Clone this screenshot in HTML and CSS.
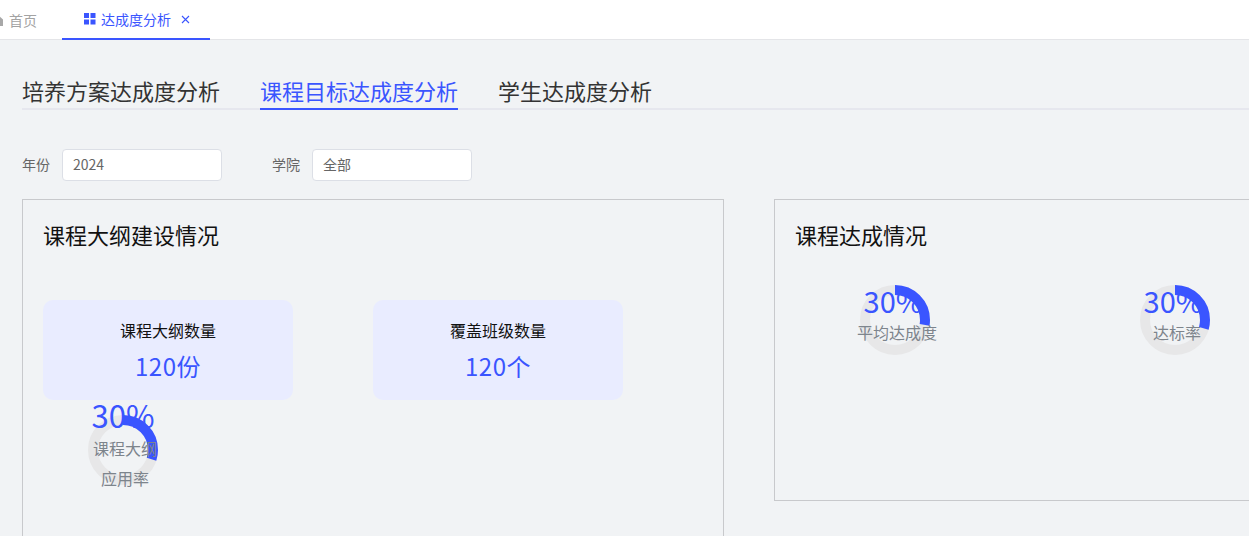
FILE: index.html
```html
<!DOCTYPE html>
<html lang="zh-CN">
<head>
    <meta charset="UTF-8">
    <title>达成度分析</title>
    <link rel="stylesheet" href="styles.css">
</head>
<body>

<div class="topbar">
    <div class="top-tab">
        <svg class="home-icon" width="14" height="14" viewBox="0 0 14 14"><path d="M7 1 13 6.5V13H1V6.5Z" fill="#a8a8a8"/></svg>
        <span>首页</span>
    </div>
    <div class="top-tab active">
        <svg width="12" height="12" viewBox="0 0 12 12" fill="#3a55ff">
            <rect x="0" y="0" width="5" height="5"/><rect x="6.5" y="0" width="5" height="5"/>
            <rect x="0" y="6.5" width="5" height="5"/><rect x="6.5" y="6.5" width="5" height="5"/>
        </svg>
        <span>达成度分析</span>
        <svg class="close-icon" width="9" height="9" viewBox="0 0 9 9"><path d="M1 1 8 8M8 1 1 8" stroke="#3a55ff" stroke-width="1.1"/></svg>
    </div>
</div>

<div class="content">
    <div class="sub-tabs">
        <div class="sub-tab">培养方案达成度分析</div>
        <div class="sub-tab active">课程目标达成度分析</div>
        <div class="sub-tab">学生达成度分析</div>
    </div>

    <div class="filters">
        <label class="filter"><span class="filter-name">年份</span><span class="input">2024</span></label>
        <label class="filter"><span class="filter-name">学院</span><span class="input">全部</span></label>
    </div>

    <div class="panels">
        <div class="panel panel-left">
            <h2>课程大纲建设情况</h2>
            <div class="cards">
                <div class="card">
                    <div class="card-title">课程大纲数量</div>
                    <div class="card-value">120份</div>
                </div>
                <div class="card">
                    <div class="card-title">覆盖班级数量</div>
                    <div class="card-value">120个</div>
                </div>
            </div>
            <div class="ring ring-usage">
                <svg width="70" height="70" viewBox="0 0 70 70">
                    <circle class="track" cx="35" cy="35" r="30"/>
                    <circle class="arc" cx="35" cy="35" r="30" stroke-dasharray="56.5 200"/>
                </svg>
                <div class="ring-text">
                    <div class="ring-num">30%</div>
                    <div class="ring-label">课程大纲应用率</div>
                </div>
            </div>
        </div>

        <div class="panel panel-right">
            <h2>课程达成情况</h2>
            <div class="rings">
                <div class="ring">
                    <svg width="70" height="70" viewBox="0 0 70 70">
                        <circle class="track" cx="35" cy="35" r="30"/>
                        <circle class="arc" cx="35" cy="35" r="30" stroke-dasharray="52 200"/>
                    </svg>
                    <div class="ring-text">
                        <div class="ring-num">30%</div>
                        <div class="ring-label">平均达成度</div>
                    </div>
                </div>
                <div class="ring">
                    <svg width="70" height="70" viewBox="0 0 70 70">
                        <circle class="track" cx="35" cy="35" r="30"/>
                        <circle class="arc" cx="35" cy="35" r="30" stroke-dasharray="55.5 200"/>
                    </svg>
                    <div class="ring-text">
                        <div class="ring-num">30%</div>
                        <div class="ring-label">达标率</div>
                    </div>
                </div>
            </div>
        </div>
    </div>
</div>

</body>
</html>
```

FILE: styles.css
```css
* {
    box-sizing: border-box;
}
html, body {
    height: 536px;
    overflow: hidden;
}
body {
    margin: 0;
    background-color: #f1f3f5;
    color: #333;
    font-family: "Noto Sans CJK SC", "Noto Sans", sans-serif;
}
.topbar {
    display: flex;
    height: 40px;
    background-color: #fff;
    border-bottom: 1px solid #e4e5e8;
    padding-left: 62px;
    position: relative;
}
.top-tab {
    display: flex;
    align-items: center;
    gap: 5px;
    height: 40px;
    font-size: 14px;
    line-height: 38px;
    color: #a3a3a3;
}
.top-tab:first-child {
    position: absolute;
    left: -10px;
    top: 0;
}
.top-tab.active {
    width: 148px;
    padding-left: 22px;
    color: #3a55ff;
    border-bottom: 2px solid #3a55ff;
}
.close-icon {
    margin-left: 5px;
}
.content {
    padding: 35px 0 0 22px;
}
.sub-tabs {
    display: flex;
    gap: 40px;
    height: 35px;
    border-bottom: 2px solid #e6e7ee;
}
.sub-tab {
    height: 35px;
    font-size: 22px;
    line-height: 30px;
    color: #333;
}
.sub-tab.active {
    color: #3a55ff;
    border-bottom: 2px solid #3a55ff;
}
.filters {
    display: flex;
    gap: 50px;
    margin-top: 39px;
}
.filter {
    display: flex;
    align-items: center;
    gap: 12px;
    font-size: 14px;
    color: #666;
}
.filter-name {
    margin-top: -3px;
}
.input {
    width: 160px;
    height: 32px;
    padding-left: 10px;
    line-height: 29px;
    background-color: #fff;
    border: 1px solid #dcdfe6;
    border-radius: 4px;
}
.panels {
    display: flex;
    gap: 50px;
    margin-top: 18px;
}
.panel {
    flex: none;
    padding: 20px;
    border: 1px solid #c8c9cc;
}
.panel h2 {
    margin: -2px 0 2px;
    font-size: 22px;
    font-weight: 400;
    line-height: 32px;
    color: #111;
}
.panel-left {
    width: 702px;
    height: 337px;
    border-bottom: none;
}
.panel-right {
    width: 500px;
    height: 302px;
}
.cards {
    display: flex;
    gap: 80px;
    margin-top: 50px;
}
.card {
    width: 250px;
    height: 100px;
    padding-top: 18px;
    text-align: center;
    background-color: #e9ecff;
    border-radius: 10px;
}
.card-title {
    font-size: 16px;
    line-height: 24px;
    color: #111;
}
.card-value {
    margin-top: 6px;
    font-size: 24px;
    line-height: 36px;
    letter-spacing: 0.5px;
    color: #3a55ff;
}
.rings {
    display: flex;
    gap: 210px;
    margin-top: 35px;
    padding-left: 65px;
}
.ring {
    position: relative;
    width: 70px;
    height: 70px;
}
.ring-usage {
    margin: 15px 0 0 45px;
}
.ring svg {
    display: block;
}
.track, .arc {
    fill: none;
    stroke-width: 10;
}
.track {
    stroke: #e7e7e8;
}
.arc {
    stroke: #3a55ff;
    transform: rotate(-90deg);
    transform-origin: 35px 35px;
}
.ring-text {
    position: absolute;
    left: -3px;
    top: -2px;
    width: 80px;
}
.ring-num {
    width: 72px;
    font-size: 29px;
    line-height: 34px;
    text-align: center;
    color: #3a55ff;
}
.ring-label {
    margin-top: 0;
    white-space: nowrap;
    text-align: center;
    font-size: 16px;
    line-height: 30px;
    color: #7d848c;
}
.ring-usage .ring-text {
    top: -18px;
    left: -3px;
}
.ring-usage .ring-num {
    width: 76px;
    font-size: 31px;
    line-height: 36px;
}
.ring-usage .ring-label {
    width: 74px;
    margin: 0 0 0 3px;
    white-space: normal;
}
```
